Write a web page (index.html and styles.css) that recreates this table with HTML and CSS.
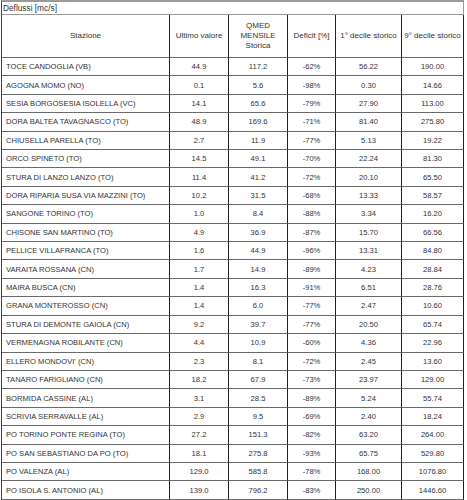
FILE: index.html
```html
<!DOCTYPE html>
<html lang="it">
<head>
<meta charset="utf-8">
<title>Deflussi</title>
<link rel="stylesheet" href="styles.css">
</head>
<body>
<div class="sheet">
  <div class="title">Deflussi [mc/s]</div>
  <div class="grid">
    <div class="cell head">Stazione</div>
    <div class="cell head">Ultimo valore</div>
    <div class="cell head">QMED<br>MENSILE<br>Storica</div>
    <div class="cell head">Deficit [%]</div>
    <div class="cell head">1° decile storico</div>
    <div class="cell head">9° decile storico</div>

    <div class="cell name">TOCE CANDOGLIA (VB)</div><div class="cell">44.9</div><div class="cell">117.2</div><div class="cell">-62%</div><div class="cell">56.22</div><div class="cell">190.00</div>
    <div class="cell name">AGOGNA MOMO (NO)</div><div class="cell">0.1</div><div class="cell">5.6</div><div class="cell">-98%</div><div class="cell">0.30</div><div class="cell">14.66</div>
    <div class="cell name">SESIA BORGOSESIA ISOLELLA (VC)</div><div class="cell">14.1</div><div class="cell">65.6</div><div class="cell">-79%</div><div class="cell">27.90</div><div class="cell">113.00</div>
    <div class="cell name">DORA BALTEA TAVAGNASCO (TO)</div><div class="cell">48.9</div><div class="cell">169.6</div><div class="cell">-71%</div><div class="cell">81.40</div><div class="cell">275.80</div>
    <div class="cell name">CHIUSELLA PARELLA (TO)</div><div class="cell">2.7</div><div class="cell">11.9</div><div class="cell">-77%</div><div class="cell">5.13</div><div class="cell">19.22</div>
    <div class="cell name">ORCO SPINETO (TO)</div><div class="cell">14.5</div><div class="cell">49.1</div><div class="cell">-70%</div><div class="cell">22.24</div><div class="cell">81.30</div>
    <div class="cell name">STURA DI LANZO LANZO (TO)</div><div class="cell">11.4</div><div class="cell">41.2</div><div class="cell">-72%</div><div class="cell">20.10</div><div class="cell">65.50</div>
    <div class="cell name">DORA RIPARIA SUSA VIA MAZZINI (TO)</div><div class="cell">10.2</div><div class="cell">31.5</div><div class="cell">-68%</div><div class="cell">13.33</div><div class="cell">58.57</div>
    <div class="cell name">SANGONE TORINO (TO)</div><div class="cell">1.0</div><div class="cell">8.4</div><div class="cell">-88%</div><div class="cell">3.34</div><div class="cell">16.20</div>
    <div class="cell name">CHISONE SAN MARTINO (TO)</div><div class="cell">4.9</div><div class="cell">36.9</div><div class="cell">-87%</div><div class="cell">15.70</div><div class="cell">66.56</div>
    <div class="cell name">PELLICE VILLAFRANCA (TO)</div><div class="cell">1.6</div><div class="cell">44.9</div><div class="cell">-96%</div><div class="cell">13.31</div><div class="cell">84.80</div>
    <div class="cell name">VARAITA ROSSANA (CN)</div><div class="cell">1.7</div><div class="cell">14.9</div><div class="cell">-89%</div><div class="cell">4.23</div><div class="cell">28.84</div>
    <div class="cell name">MAIRA BUSCA (CN)</div><div class="cell">1.4</div><div class="cell">16.3</div><div class="cell">-91%</div><div class="cell">6.51</div><div class="cell">28.76</div>
    <div class="cell name">GRANA MONTEROSSO (CN)</div><div class="cell">1.4</div><div class="cell">6.0</div><div class="cell">-77%</div><div class="cell">2.47</div><div class="cell">10.60</div>
    <div class="cell name">STURA DI DEMONTE GAIOLA (CN)</div><div class="cell">9.2</div><div class="cell">39.7</div><div class="cell">-77%</div><div class="cell">20.50</div><div class="cell">65.74</div>
    <div class="cell name">VERMENAGNA ROBILANTE (CN)</div><div class="cell">4.4</div><div class="cell">10.9</div><div class="cell">-60%</div><div class="cell">4.36</div><div class="cell">22.96</div>
    <div class="cell name">ELLERO MONDOVI' (CN)</div><div class="cell">2.3</div><div class="cell">8.1</div><div class="cell">-72%</div><div class="cell">2.45</div><div class="cell">13.60</div>
    <div class="cell name">TANARO FARIGLIANO (CN)</div><div class="cell">18.2</div><div class="cell">67.9</div><div class="cell">-73%</div><div class="cell">23.97</div><div class="cell">129.00</div>
    <div class="cell name">BORMIDA CASSINE (AL)</div><div class="cell">3.1</div><div class="cell">28.5</div><div class="cell">-89%</div><div class="cell">5.24</div><div class="cell">55.74</div>
    <div class="cell name">SCRIVIA SERRAVALLE (AL)</div><div class="cell">2.9</div><div class="cell">9.5</div><div class="cell">-69%</div><div class="cell">2.40</div><div class="cell">18.24</div>
    <div class="cell name">PO TORINO PONTE REGINA (TO)</div><div class="cell">27.2</div><div class="cell">151.3</div><div class="cell">-82%</div><div class="cell">63.20</div><div class="cell">264.00</div>
    <div class="cell name">PO SAN SEBASTIANO DA PO (TO)</div><div class="cell">18.1</div><div class="cell">275.8</div><div class="cell">-93%</div><div class="cell">65.75</div><div class="cell">529.80</div>
    <div class="cell name">PO VALENZA (AL)</div><div class="cell">129.0</div><div class="cell">585.8</div><div class="cell">-78%</div><div class="cell">168.00</div><div class="cell">1076.80</div>
    <div class="cell name">PO ISOLA S. ANTONIO (AL)</div><div class="cell">139.0</div><div class="cell">796.2</div><div class="cell">-83%</div><div class="cell">250.00</div><div class="cell">1446.60</div>
  </div>
</div>
</body>
</html>
```

FILE: styles.css
```css
html, body {
  margin: 0;
  padding: 0;
  background: #ffffff;
}

body {
  font-family: "Liberation Sans", Arial, sans-serif;
  color: #333333;
}

.sheet {
  margin-left: 1px;
  width: 463px;
  border-top: 2px solid #9a9a9a;
  border-left: 1px solid #444444;
  box-sizing: border-box;
}

.title {
  height: 13px;
  box-sizing: border-box;
  border-bottom: 1px solid #9a9a9a;
  border-right: 1px solid #9a9a9a;
  font-size: 8.3px;
  line-height: 12px;
  padding-left: 1px;
  color: #333333;
}

.grid {
  display: grid;
  grid-template-columns: 168px 59px 59px 48px 66px 62px;
  grid-template-rows: 43px;
  grid-auto-rows: 18.42px;
}

.cell {
  box-sizing: border-box;
  border-right: 1px solid #222222;
  border-bottom: 1px solid #6a6a6a;
  font-size: 7.6px;
  display: flex;
  align-items: center;
  justify-content: center;
  text-align: center;
  white-space: nowrap;
  overflow: hidden;
}

.cell.head {
  font-size: 8px;
  line-height: 10px;
  color: #333333;
}

.cell.name {
  justify-content: flex-start;
  padding-left: 4px;
}
```
